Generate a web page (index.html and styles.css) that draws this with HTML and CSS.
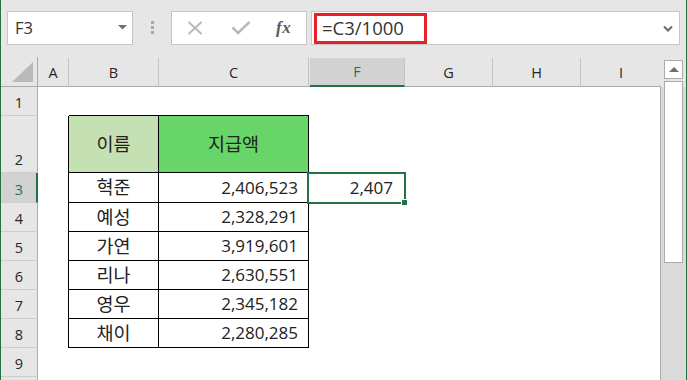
FILE: index.html
```html
<!DOCTYPE html>
<html lang="ko">
<head>
<meta charset="utf-8">
<title>Excel</title>
<link rel="stylesheet" href="styles.css">
</head>
<body>
<div class="app">
  <div class="fbar">
    <div class="namebox">
      <span class="nb-text">F3</span>
      <svg class="nb-arrow" width="9" height="5" viewBox="0 0 9 5"><polygon points="0,0 9,0 4.5,4.5" fill="#6e6e6e"/></svg>
    </div>
    <div class="dots"><i></i><i></i><i></i></div>
    <div class="btnbox">
      <svg class="ico-x" width="16" height="14" viewBox="0 0 16 14"><path d="M1.5 1 L14.5 13 M14.5 1 L1.5 13" stroke="#b9b9b9" stroke-width="2" fill="none"/></svg>
      <svg class="ico-check" width="20" height="14" viewBox="0 0 20 14"><path d="M1.5 6.5 L7 12 L18.5 1" stroke="#b9b9b9" stroke-width="2.6" fill="none"/></svg>
      <span class="ico-fx">fx</span>
    </div>
    <div class="fbox">
      <div class="hilite">=C3/1000</div>
      <svg class="chev" width="10" height="7" viewBox="0 0 10 7"><path d="M1 1.5 L5 5.5 L9 1.5" stroke="#707070" stroke-width="2.2" fill="none"/></svg>
    </div>
  </div>

  <div class="main">
    <div class="sheet">
      <div class="row hdr">
        <div class="corner"><svg width="22" height="21" viewBox="0 0 22 21"><polygon points="21,0 21,20 0,20" fill="#b9b9b9"/></svg></div>
        <div class="ch">A</div><div class="ch">B</div><div class="ch">C</div><div class="ch hid"></div>
        <div class="ch sel">F</div><div class="ch">G</div><div class="ch">H</div><div class="ch last">I</div>
      </div>
      <div class="row r1">
        <div class="rh">1</div><div class="c"></div><div class="c tb-top"></div><div class="c tb-top"></div><div class="c"></div>
        <div class="c"></div><div class="c"></div><div class="c"></div><div class="c edge"></div>
      </div>
      <div class="row r2">
        <div class="rh">2</div><div class="c tb-l"></div>
        <div class="c tb name head1">이름</div><div class="c tb name head2">지급액</div><div class="c"></div>
        <div class="c"></div><div class="c"></div><div class="c"></div><div class="c edge"></div>
      </div>
      <div class="row r3">
        <div class="rh rsel">3</div><div class="c tb-l"></div>
        <div class="c tb name">혁준</div><div class="c tb num">2,406,523</div><div class="c"></div>
        <div class="c num active">2,407<span class="handle"></span></div><div class="c"></div><div class="c"></div><div class="c edge"></div>
      </div>
      <div class="row rn">
        <div class="rh">4</div><div class="c tb-l"></div>
        <div class="c tb name">예성</div><div class="c tb num">2,328,291</div><div class="c"></div>
        <div class="c"></div><div class="c"></div><div class="c"></div><div class="c edge"></div>
      </div>
      <div class="row rn">
        <div class="rh">5</div><div class="c tb-l"></div>
        <div class="c tb name">가연</div><div class="c tb num">3,919,601</div><div class="c"></div>
        <div class="c"></div><div class="c"></div><div class="c"></div><div class="c edge"></div>
      </div>
      <div class="row rn">
        <div class="rh">6</div><div class="c tb-l"></div>
        <div class="c tb name">리나</div><div class="c tb num">2,630,551</div><div class="c"></div>
        <div class="c"></div><div class="c"></div><div class="c"></div><div class="c edge"></div>
      </div>
      <div class="row rn">
        <div class="rh">7</div><div class="c tb-l"></div>
        <div class="c tb name">영우</div><div class="c tb num">2,345,182</div><div class="c"></div>
        <div class="c"></div><div class="c"></div><div class="c"></div><div class="c edge"></div>
      </div>
      <div class="row rn">
        <div class="rh">8</div><div class="c tb-l"></div>
        <div class="c tb name">채이</div><div class="c tb num">2,280,285</div><div class="c"></div>
        <div class="c"></div><div class="c"></div><div class="c"></div><div class="c edge"></div>
      </div>
      <div class="row rn">
        <div class="rh">9</div><div class="c"></div>
        <div class="c"></div><div class="c"></div><div class="c"></div>
        <div class="c"></div><div class="c"></div><div class="c"></div><div class="c edge"></div>
      </div>
      <div class="row rn">
        <div class="rh"></div><div class="c"></div>
        <div class="c"></div><div class="c"></div><div class="c"></div>
        <div class="c"></div><div class="c"></div><div class="c"></div><div class="c edge"></div>
      </div>
    </div>
    <div class="vscroll">
      <div class="sb-up"><svg width="10" height="5" viewBox="0 0 10 5"><polygon points="0,5 10,5 5,0" fill="#6e6e6e"/></svg></div>
      <div class="sb-thumb"></div>
    </div>
  </div>
</div>
</body>
</html>
```

FILE: styles.css
```css
* { box-sizing: border-box; }
html, body { margin: 0; padding: 0; }
body {
  width: 687px;
  height: 380px;
  overflow: hidden;
  background: #e6e6e6;
  font-family: "Open Sans", "Noto Sans CJK KR", sans-serif;
  color: #222;
}
.app {
  width: 687px;
  height: 380px;
  border-left: 1px solid #217346;
  border-right: 1px solid #217346;
  display: flex;
  flex-direction: column;
  overflow: hidden;
}

/* formula bar */
.fbar {
  height: 57px;
  flex: none;
  display: flex;
  align-items: flex-start;
  padding-top: 11px;
  padding-left: 6px;
}
.namebox {
  width: 126px;
  height: 34px;
  background: #fff;
  border: 1px solid #c6c6c6;
  display: flex;
  align-items: center;
  padding-left: 7px;
  padding-right: 5px;
}
.nb-text { font-size: 16.5px; color: #333; flex: 1; line-height: 20px; }
.nb-arrow { display: block; margin-bottom: 1px; }
.dots {
  margin-left: 18px;
  margin-top: 10px;
  display: flex;
  flex-direction: column;
  gap: 2px;
}
.dots i { display: block; width: 3px; height: 3px; background: #a8a8a8; }
.btnbox {
  margin-left: 17px;
  width: 136px;
  height: 34px;
  background: #fff;
  border: 1px solid #c6c6c6;
  display: flex;
  align-items: center;
  padding-left: 15px;
}
.ico-x { display: block; }
.ico-check { display: block; margin-left: 28px; }
.ico-fx {
  margin-left: 25px;
  font-family: "Liberation Serif", serif;
  font-style: italic;
  font-weight: bold;
  font-size: 17px;
  color: #5a5a5a;
  letter-spacing: 0.5px;
  line-height: 20px;
}
.fbox {
  margin-left: 4px;
  width: 369px;
  height: 34px;
  background: #fff;
  border: 1px solid #c6c6c6;
  display: flex;
  align-items: flex-start;
  padding-left: 2px;
  padding-top: 1px;
}
.hilite {
  width: 113px;
  height: 31px;
  border: 3px solid #e8202a;
  font-size: 18.5px;
  line-height: 24px;
  padding-left: 5px;
  color: #333;
  white-space: nowrap;
}
.chev { display: block; margin-left: auto; margin-right: 6px; margin-top: 12px; }

/* sheet */
.main { flex: 1; display: flex; min-height: 0; }
.sheet { width: 660px; flex: none; }
.row {
  display: grid;
  grid-template-columns: 37px 31px 90px 150px 1px 95px 88px 88px 80px;
}
.hdr { height: 30px; }
.r1 { height: 29px; }
.r2 { height: 57px; }
.r3 { height: 30px; }
.rn { height: 29px; }

.corner {
  border-right: 1px solid #ababab;
  border-bottom: 1px solid #ababab;
  display: flex;
  align-items: flex-end;
  justify-content: flex-end;
  padding: 0 3px 3px 0;
}
.corner svg { display: block; }
.ch {
  margin-top: 1px;
  border-right: 1px solid #c4c4c4;
  border-bottom: 1px solid #ababab;
  font-size: 14.5px;
  display: flex;
  align-items: center;
  justify-content: center;
  color: #262626;
}
.ch.hid { border-right: 0; }
.ch.last { border-right: 0; }
.ch.sel {
  background: #d2d2d2;
  color: #217346;
  border-bottom: 2px solid #217346;
  border-right-color: #c4c4c4;
}
.rh {
  background: #e6e6e6;
  border-right: 1px solid #ababab;
  border-bottom: 1px solid #cdcdcd;
  font-size: 14.5px;
  color: #262626;
  display: flex;
  align-items: flex-end;
  justify-content: center;
  padding-bottom: 3px;
}
.rh.rsel {
  background: #d2d2d2;
  color: #217346;
  border-right: 2px solid #217346;
  padding-left: 1px;
}
.c { background: #fff; }
.c.edge { border-right: 1px solid #ababab; }
.tb-top { border-bottom: 1px solid #000; }
.tb-l { border-right: 1px solid #000; }
.tb {
  border-right: 1px solid #000;
  border-bottom: 1px solid #000;
  display: flex;
  align-items: center;
}
.name { justify-content: center; font-size: 18.5px; padding-bottom: 1px; line-height: 24px; }
.head1 { background: #c5e0b3; }
.head2 { background: #67d567; }
.num { justify-content: flex-end; font-size: 17px; padding-right: 10px; padding-bottom: 1px; }
.active {
  position: relative;
  display: flex;
  align-items: center;
  padding-right: 12px;
}
.active::before {
  content: "";
  position: absolute;
  left: -3px;
  top: -1px;
  right: -1px;
  bottom: -1px;
  border: 2px solid #217346;
}
.handle {
  position: absolute;
  right: -2px;
  bottom: -2px;
  width: 5px;
  height: 5px;
  background: #217346;
  box-shadow: -1px -1px 0 #fff;
}

/* scrollbar */
.vscroll {
  width: 25px;
  flex: none;
  padding: 3px 3px 0 3px;
  display: flex;
  flex-direction: column;
  gap: 2px;
  background: linear-gradient(#e6e6e6 0 30px, #dadada 30px);
}
.sb-up {
  height: 19px;
  background: #fff;
  border: 1px solid #ababab;
  display: flex;
  align-items: center;
  justify-content: center;
}
.sb-up svg { display: block; }
.sb-thumb {
  height: 182px;
  background: #fff;
  border: 1px solid #ababab;
}
```
